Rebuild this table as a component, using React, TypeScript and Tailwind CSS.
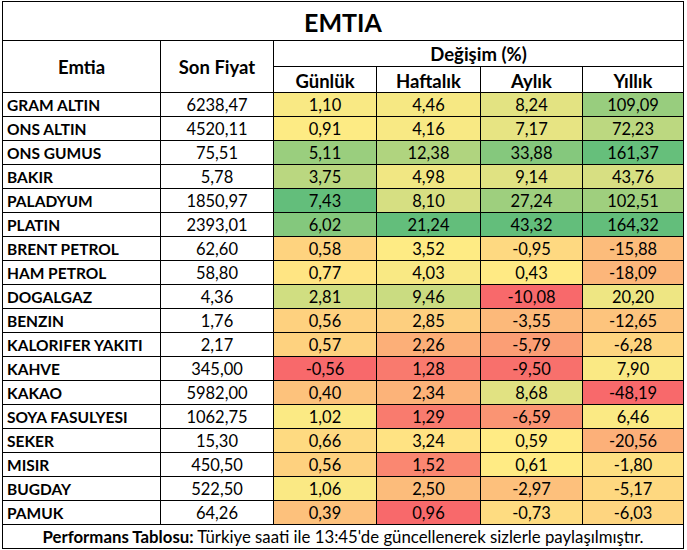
import React from "react";

type Row = [string, string, number, number, number, number];

const rows: Row[] = [
  ["GRAM ALTIN", "6238,47", 1.1, 4.46, 8.24, 109.09],
  ["ONS ALTIN", "4520,11", 0.91, 4.16, 7.17, 72.23],
  ["ONS GUMUS", "75,51", 5.11, 12.38, 33.88, 161.37],
  ["BAKIR", "5,78", 3.75, 4.98, 9.14, 43.76],
  ["PALADYUM", "1850,97", 7.43, 8.1, 27.24, 102.51],
  ["PLATIN", "2393,01", 6.02, 21.24, 43.32, 164.32],
  ["BRENT PETROL", "62,60", 0.58, 3.52, -0.95, -15.88],
  ["HAM PETROL", "58,80", 0.77, 4.03, 0.43, -18.09],
  ["DOGALGAZ", "4,36", 2.81, 9.46, -10.08, 20.2],
  ["BENZIN", "1,76", 0.56, 2.85, -3.55, -12.65],
  ["KALORIFER YAKITI", "2,17", 0.57, 2.26, -5.79, -6.28],
  ["KAHVE", "345,00", -0.56, 1.28, -9.5, 7.9],
  ["KAKAO", "5982,00", 0.4, 2.34, 8.68, -48.19],
  ["SOYA FASULYESI", "1062,75", 1.02, 1.29, -6.59, 6.46],
  ["SEKER", "15,30", 0.66, 3.24, 0.59, -20.56],
  ["MISIR", "450,50", 0.56, 1.52, 0.61, -1.8],
  ["BUGDAY", "522,50", 1.06, 2.5, -2.97, -5.17],
  ["PAMUK", "64,26", 0.39, 0.96, -0.73, -6.03],
];

const RED = [248, 105, 107];
const YEL = [255, 235, 132];
const GRN = [99, 190, 123];

function stats(col: number) {
  const vals = rows.map((r) => r[col] as number).sort((a, b) => a - b);
  const n = vals.length;
  const mid = n % 2 === 0 ? (vals[n / 2 - 1] + vals[n / 2]) / 2 : vals[(n - 1) / 2];
  return { min: vals[0], max: vals[n - 1], mid };
}

const colStats = [2, 3, 4, 5].map((c) => stats(c));

function mix(a: number[], b: number[], t: number) {
  return `rgb(${a.map((x, i) => Math.round(x + (b[i] - x) * t)).join(",")})`;
}

function colorFor(v: number, s: { min: number; max: number; mid: number }) {
  if (v <= s.mid) {
    const t = s.mid === s.min ? 1 : (v - s.min) / (s.mid - s.min);
    return mix(RED, YEL, t);
  }
  const t = (v - s.mid) / (s.max - s.mid);
  return mix(YEL, GRN, t);
}

const fmt = (v: number) => v.toFixed(2).replace(".", ",");

export default function App() {
  return (
    <div className="min-h-[550px] bg-white font-[Lato,sans-serif] text-black">
      <div className="ml-[2px] mt-[1px] grid w-[682px] grid-cols-[157px_112px_102px_103px_101px_100px] grid-rows-[38px_25px_25px_repeat(19,23px)] gap-px bg-black p-px text-[16.5px] leading-none">
        <div className="col-span-6 flex items-center justify-center bg-white pt-[3px] text-[25px] font-bold">
          EMTIA
        </div>
        <div className="row-span-2 flex items-center justify-center bg-white pt-[2px] text-[18.5px] font-bold">
          Emtia
        </div>
        <div className="row-span-2 flex items-center justify-center bg-white pt-[2px] text-[18.5px] font-bold">
          Son Fiyat
        </div>
        <div className="col-span-4 flex items-center justify-center bg-white pt-[1px] text-[18.5px] font-bold">
          Değişim (%)
        </div>
        {["Günlük", "Haftalık", "Aylık", "Yıllık"].map((h) => (
          <div key={h} className="flex items-center justify-center bg-white pt-[3px] text-[18.5px] font-bold">
            {h}
          </div>
        ))}
        {rows.map((r) => (
          <React.Fragment key={r[0]}>
            <div className="flex items-center bg-white pl-[4px] pt-[2px] text-[15.5px] font-bold">{r[0]}</div>
            <div className="flex items-center justify-center bg-white pt-[2px]">{r[1]}</div>
            {[2, 3, 4, 5].map((c, i) => (
              <div
                key={c}
                className="flex items-center justify-center pt-[2px]"
                style={{ backgroundColor: colorFor(r[c] as number, colStats[i]) }}
              >
                {fmt(r[c] as number)}
              </div>
            ))}
          </React.Fragment>
        ))}
        <div className="col-span-6 flex items-center justify-center bg-white pt-[2px] text-[16.8px]">
          <span className="font-bold">Performans Tablosu:</span>
          <span>&nbsp;Türkiye saati ile 13:45'de güncellenerek sizlerle paylaşılmıştır.</span>
        </div>
      </div>
    </div>
  );
}
